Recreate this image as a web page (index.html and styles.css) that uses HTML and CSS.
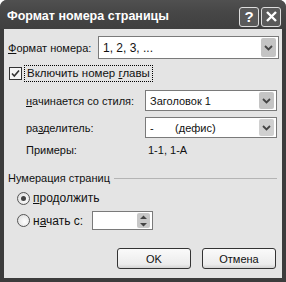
FILE: index.html
```html
<!DOCTYPE html>
<html lang="ru">
<head>
  <meta charset="UTF-8" />
  <title>Формат номера страницы</title>
  <link rel="stylesheet" href="styles.css">
</head>
<body>
  <div class="window">
    <div class="titlebar">
      <span class="title">Формат номера страницы</span>
      <div class="title-buttons">
        <span class="tbtn">?</span>
        <span class="tbtn">
          <svg width="13" height="13" viewBox="0 0 13 13"><path d="M2 2 L11 11 M11 2 L2 11" stroke="#fff" stroke-width="2.4"/></svg>
        </span>
      </div>
    </div>

    <div class="client">
      <div class="row row-format">
        <label class="lbl lbl-wide"><u>Ф</u>ормат номера:</label>
        <div class="select select-wide">
          <span class="select-text">1, 2, 3, ...</span>
          <span class="drop"><svg width="9" height="6" viewBox="0 0 9 6"><path d="M1 1 L4.5 4.5 L8 1" stroke="#444" stroke-width="1.8" fill="none"/></svg></span>
        </div>
      </div>

      <div class="row row-check">
        <span class="checkbox">
          <svg width="11" height="11" viewBox="0 0 11 11"><path d="M2 5.5 L4.3 8 L9 2.5" stroke="#333" stroke-width="1.6" fill="none"/></svg>
        </span>
        <span class="focus-label">Включить номер <u>г</u>лавы</span>
      </div>

      <div class="row row-style">
        <label class="lbl lbl-indent"><u>н</u>ачинается со стиля:</label>
        <div class="select">
          <span class="select-text">Заголовок 1</span>
          <span class="drop"><svg width="9" height="6" viewBox="0 0 9 6"><path d="M1 1 L4.5 4.5 L8 1" stroke="#444" stroke-width="1.8" fill="none"/></svg></span>
        </div>
      </div>

      <div class="row row-sep">
        <label class="lbl lbl-indent">ра<u>з</u>делитель:</label>
        <div class="select">
          <span class="select-text">-&nbsp;&nbsp;&nbsp;&nbsp;&nbsp;&nbsp;&nbsp;(дефис)</span>
          <span class="drop drop-dim"><svg width="9" height="6" viewBox="0 0 9 6"><path d="M1 1 L4.5 4.5 L8 1" stroke="#444" stroke-width="1.8" fill="none"/></svg></span>
        </div>
      </div>

      <div class="row row-examples">
        <span class="lbl lbl-indent">Примеры:</span>
        <span class="examples">1-1, 1-А</span>
      </div>

      <div class="group-head">
        <span>Нумерация страниц</span>
        <span class="group-line"></span>
      </div>

      <div class="row row-radio1">
        <span class="radio checked"></span>
        <span class="radio-label"><u>п</u>родолжить</span>
      </div>

      <div class="row row-radio2">
        <span class="radio"></span>
        <span class="radio-label radio-label-short">н<u>а</u>чать с:</span>
        <div class="spin">
          <span class="spin-btn">
            <svg width="9" height="14" viewBox="0 0 9 14"><path d="M1 5 L4.5 1.5 L8 5 Z M1 9 L4.5 12.5 L8 9 Z" fill="#444"/></svg>
          </span>
        </div>
      </div>

      <div class="buttons">
        <button class="btn">OK</button>
        <button class="btn">Отмена</button>
      </div>
    </div>
  </div>
</body>
</html>
```

FILE: styles.css
```css
body {
  margin: 0;
  background: #fff;
  font-family: 'Liberation Sans', Arial, sans-serif;
  font-size: 11px;
  color: #111;
}

.window {
  width: 286px;
  height: 282px;
  background: #3c3c3c;
  border-radius: 7px 7px 0 0;
  display: flex;
  flex-direction: column;
  box-sizing: border-box;
}

.titlebar {
  height: 29px;
  display: flex;
  align-items: center;
  padding-left: 7px;
  background: linear-gradient(#505050, #474747 40%, #3f3f3f);
  border-radius: 7px 7px 0 0;
}

.title {
  color: #fff;
  font-weight: bold;
  font-size: 12.5px;
  padding-top: 2px;
  white-space: nowrap;
}

.title-buttons {
  margin-left: auto;
  margin-right: 5px;
  display: flex;
  gap: 2px;
  padding-top: 4px;
}

.tbtn {
  width: 18px;
  height: 18px;
  border: 1px solid #ddd;
  border-radius: 3px;
  background: #5a5a5a;
  color: #fff;
  font-weight: bold;
  font-size: 15px;
  display: flex;
  align-items: center;
  justify-content: center;
}

.client {
  flex: 1;
  margin: 0 4px 4px 4px;
  background: #e4e4e4;
  display: flex;
  flex-direction: column;
  padding-left: 4px;
}

u {
  text-decoration: underline;
}

.row {
  display: flex;
  align-items: center;
}

.lbl {
  flex-shrink: 0;
  white-space: nowrap;
  box-sizing: border-box;
}

.row-format {
  margin-top: 7px;
  height: 23px;
}

.lbl-wide {
  width: 90px;
}

.lbl-indent {
  width: 137px;
  padding-left: 18px;
}

.select {
  width: 132px;
  height: 21px;
  box-sizing: border-box;
  border: 1px solid #7a7a7a;
  background: #fff;
  display: flex;
  align-items: center;
  padding-left: 4px;
  padding-right: 2px;
  flex-shrink: 0;
}

.select-wide {
  width: 181px;
  height: 23px;
  font-size: 12px;
}

.select-text {
  flex: 1;
  white-space: nowrap;
}

.drop {
  width: 15px;
  height: 17px;
  background: #c4c4c4;
  border-radius: 2px;
  display: flex;
  align-items: center;
  justify-content: center;
}

.select-wide .drop {
  height: 19px;
}

.drop-dim {
  background: #d0d0d0;
}

.row-check {
  margin-top: 6px;
  height: 17px;
}

.checkbox {
  width: 11px;
  height: 11px;
  border: 1px solid #333;
  background: #f4f4f4;
  margin-left: 1px;
  display: flex;
  align-items: center;
  justify-content: center;
}

.focus-label {
  margin-left: 2px;
  height: 17px;
  box-sizing: border-box;
  border: 1px dotted #000;
  padding: 0 2px;
  line-height: 15px;
  font-size: 11.5px;
}

.row-style {
  margin-top: 8px;
  height: 21px;
}

.row-sep {
  margin-top: 6px;
  height: 21px;
}

.row-examples {
  margin-top: 5px;
  height: 14px;
}

.examples {
  padding-left: 3px;
}

.group-head {
  margin-top: 14px;
  height: 14px;
  display: flex;
  align-items: center;
}

.group-line {
  flex: 1;
  height: 1px;
  background: #b4b4b4;
  margin-left: 4px;
  margin-right: 5px;
}

.row-radio1 {
  margin-top: 5px;
  height: 16px;
}

.row-radio2 {
  margin-top: 5px;
  height: 19px;
}

.radio {
  width: 11px;
  height: 11px;
  border: 1px solid #555;
  border-radius: 50%;
  background: radial-gradient(circle at 60% 60%, #fff, #d8d8d8);
  margin-left: 9px;
  position: relative;
}

.radio.checked::after {
  content: "";
  position: absolute;
  left: 3px;
  top: 3px;
  width: 5px;
  height: 5px;
  border-radius: 50%;
  background: #444;
}

.radio-label {
  margin-left: 3px;
  font-size: 12px;
}

.radio-label-short {
  width: 59px;
}

.spin {
  width: 61px;
  height: 19px;
  box-sizing: border-box;
  border: 1px solid #7a7a7a;
  background: #fff;
  display: flex;
  justify-content: flex-end;
  align-items: center;
  padding-right: 2px;
}

.spin-btn {
  width: 13px;
  height: 15px;
  background: #c8c8c8;
  border-radius: 2px;
  display: flex;
  align-items: center;
  justify-content: center;
}

.buttons {
  margin-top: auto;
  margin-bottom: 9px;
  display: flex;
  justify-content: flex-end;
  gap: 11px;
  padding-right: 6px;
}

.btn {
  width: 74px;
  height: 21px;
  font-family: 'Liberation Sans', Arial, sans-serif;
  font-size: 11px;
  color: #111;
  background: linear-gradient(#fafafa, #ececec 80%, #d4d4d4);
  border: 1px solid #333;
  border-radius: 3px;
  padding: 0;
}
```
